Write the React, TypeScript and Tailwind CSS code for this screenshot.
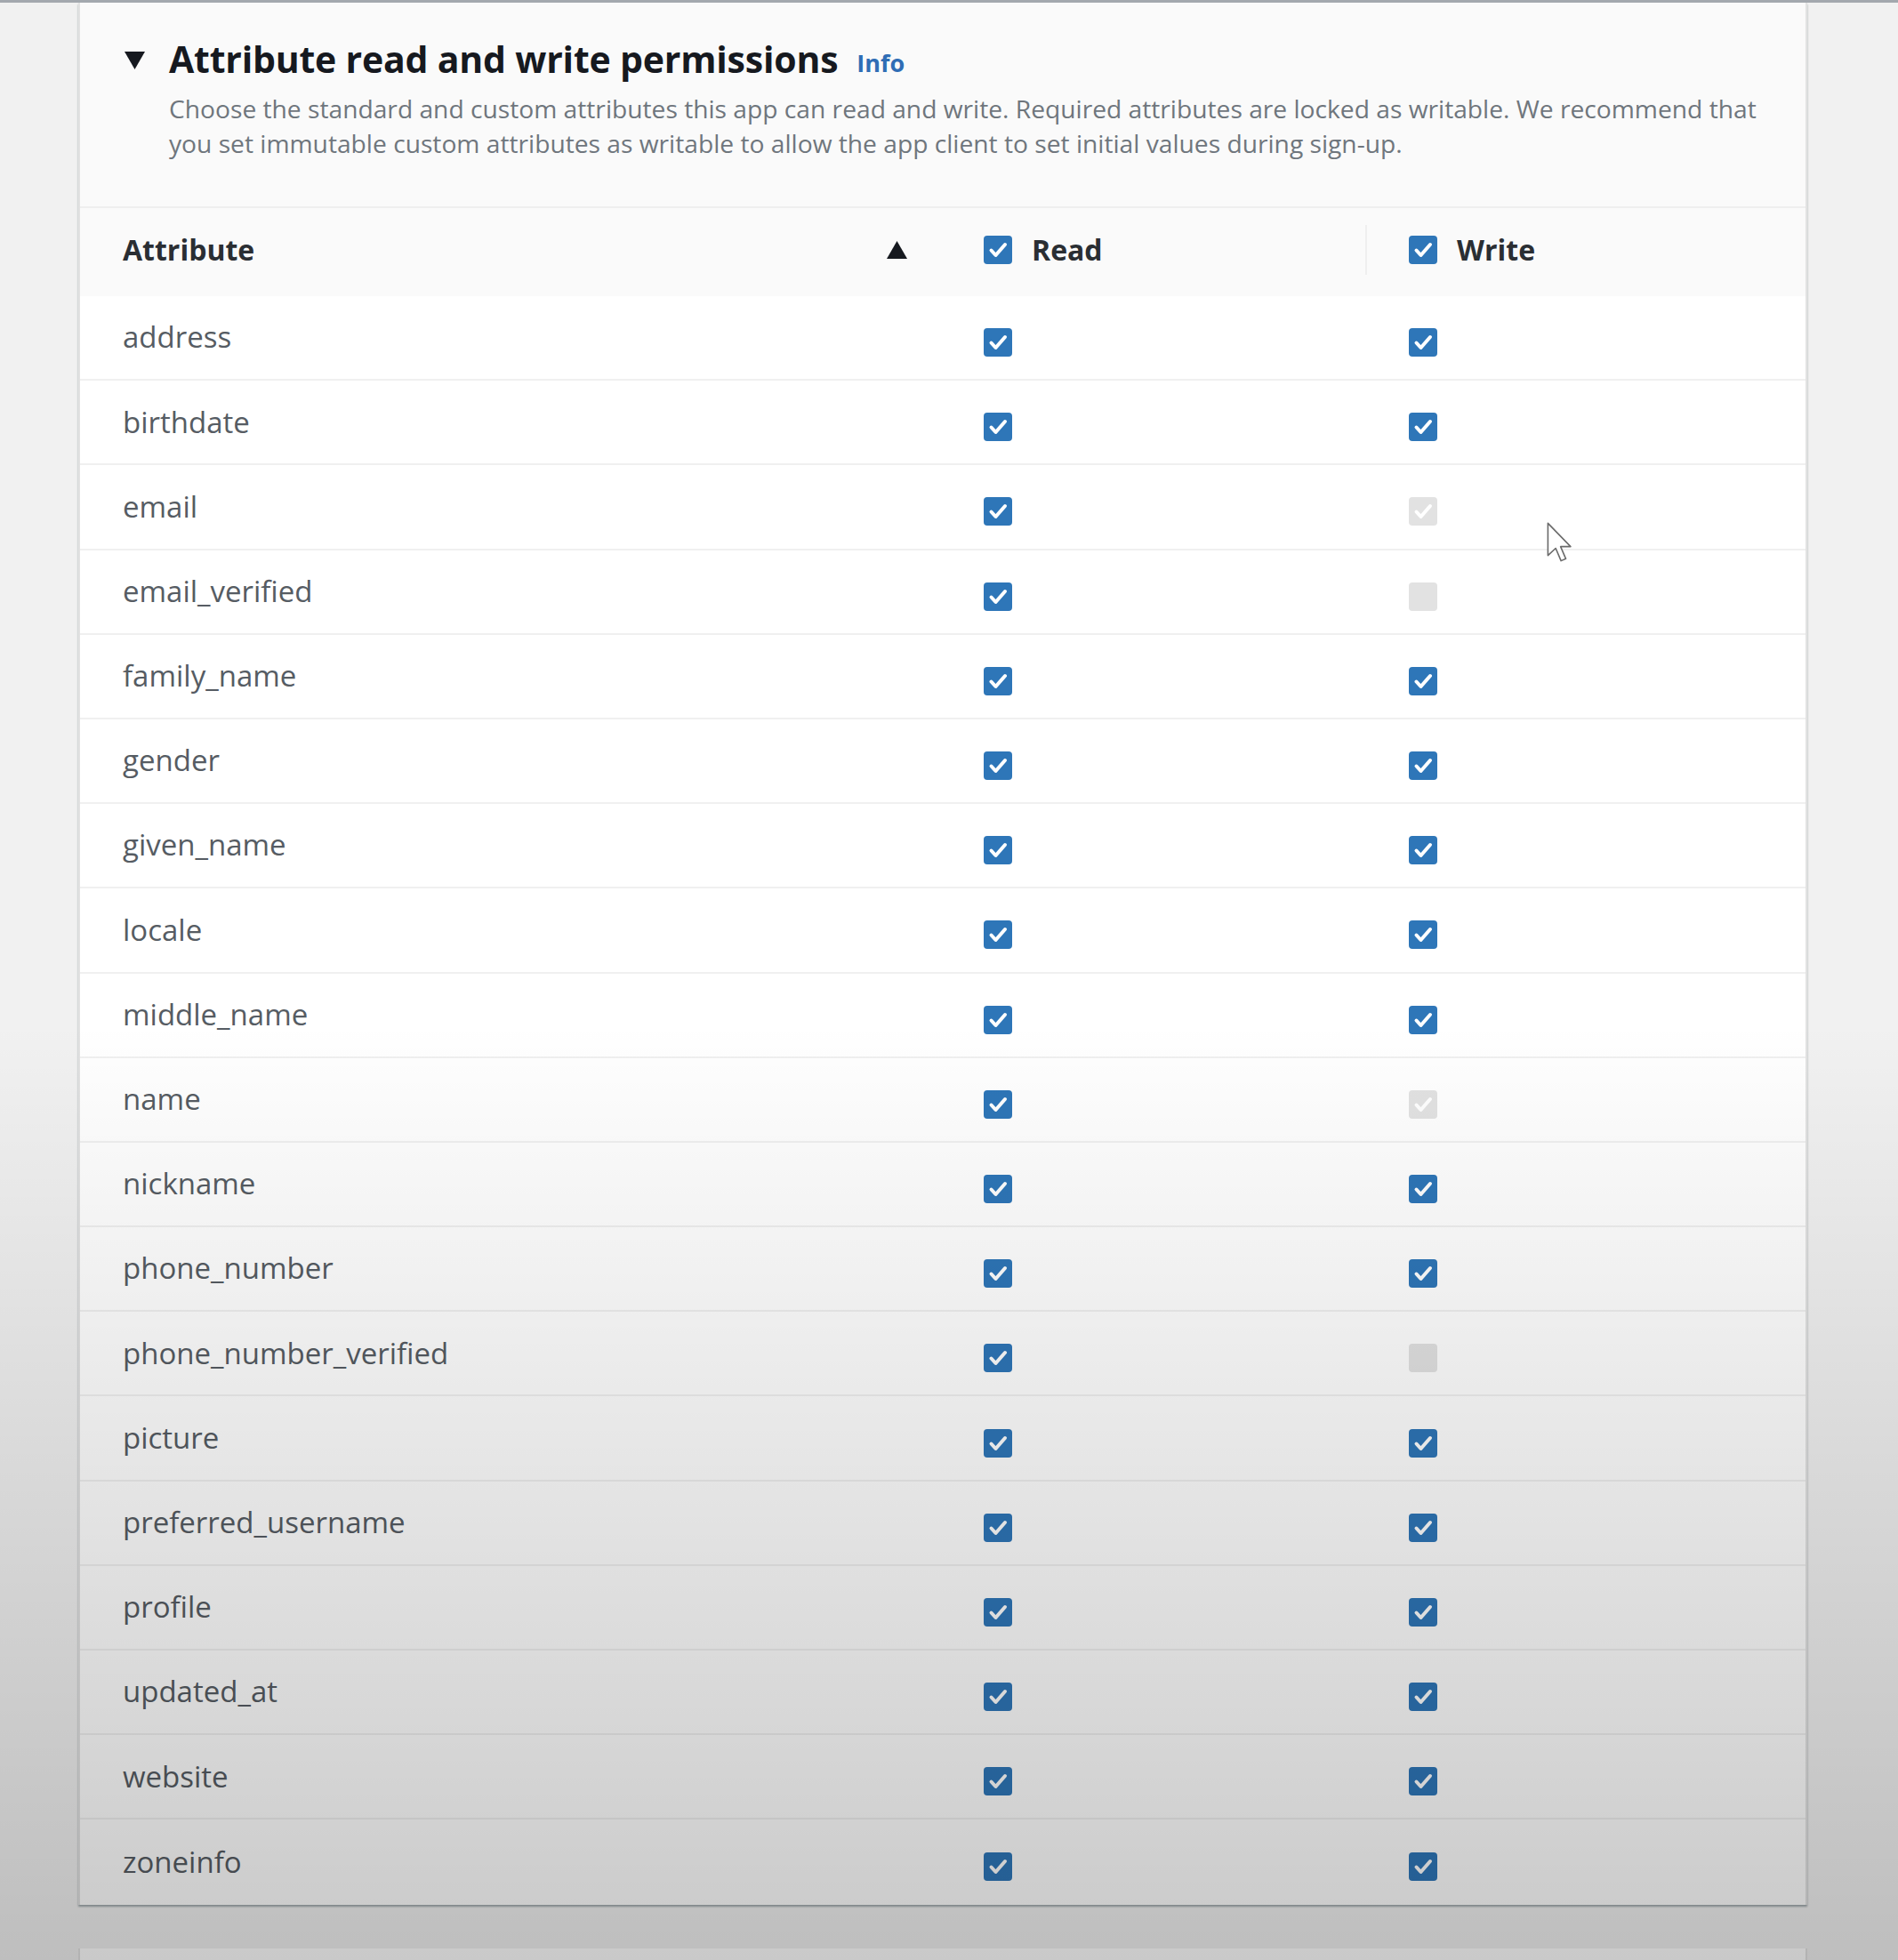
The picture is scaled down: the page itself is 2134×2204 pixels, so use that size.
import React from "react";

type Row = { name: string; write: "on" | "lockedOn" | "lockedOff" };

const rows: Row[] = [
  { name: "address", write: "on" },
  { name: "birthdate", write: "on" },
  { name: "email", write: "lockedOn" },
  { name: "email_verified", write: "lockedOff" },
  { name: "family_name", write: "on" },
  { name: "gender", write: "on" },
  { name: "given_name", write: "on" },
  { name: "locale", write: "on" },
  { name: "middle_name", write: "on" },
  { name: "name", write: "lockedOn" },
  { name: "nickname", write: "on" },
  { name: "phone_number", write: "on" },
  { name: "phone_number_verified", write: "lockedOff" },
  { name: "picture", write: "on" },
  { name: "preferred_username", write: "on" },
  { name: "profile", write: "on" },
  { name: "updated_at", write: "on" },
  { name: "website", write: "on" },
  { name: "zoneinfo", write: "on" },
];

function Checkbox({ state }: { state: "on" | "lockedOn" | "lockedOff" }) {
  const bg = state === "on" ? "bg-[#2e76b8]" : "bg-[#e2e2e2]";
  return (
    <div className={`w-[32px] h-[32px] rounded-[4px] ${bg} flex items-center justify-center shrink-0`}>
      {state !== "lockedOff" && (
        <svg width="32" height="32" viewBox="0 0 32 32">
          <path d="M8.5 16.5 L13.5 22 L24 10" fill="none" stroke="#ffffff" strokeWidth="4" strokeLinecap="round" strokeLinejoin="round" />
        </svg>
      )}
    </div>
  );
}

export default function App() {
  return (
    <div className="relative w-[2134px] h-[2204px] overflow-hidden bg-[#f1f1f1] font-['Open_Sans',sans-serif]">
      <div className="h-[3px] bg-[#a3a8ae]" />
      <div className="ml-[88px] w-[1944px] bg-[#fafafa] border-x-2 border-[#e2e2e2] shadow-[0_2px_2px_0_rgba(0,28,36,0.35)]">
        {/* Title */}
        <div className="pt-[35px] pl-[50px] pr-[40px]">
          <div className="flex items-center h-[56px]">
            <svg width="23" height="20" viewBox="0 0 23 20" className="shrink-0 mt-[4px]">
              <polygon points="0,0 23,0 11.5,20" fill="#16191f" />
            </svg>
            <div className="ml-[27px] text-[41px] leading-[56px] font-bold text-[#16191f] tracking-[-0.2px]">
              Attribute read and write permissions
            </div>
            <div className="ml-[21px] mt-[10px] text-[27px] font-bold text-[#2f6db5]">Info</div>
          </div>
          <div className="ml-[50px] mt-[9px] text-[28.2px] leading-[39px] text-[#6f767d] whitespace-nowrap">
            Choose the standard and custom attributes this app can read and write. Required attributes are locked as writable. We recommend that
            <br />
            you set immutable custom attributes as writable to allow the app client to set initial values during sign-up.
          </div>
        </div>

        {/* Table */}
        <div className="mt-[51px]">
          <div className="flex items-center h-[101px] pb-[5px] border-t-2 border-[#efefef] bg-[#fafafa] text-[32px] font-bold text-[#2a2e33]">
            <div className="w-[1016px] pl-[48px] pr-[86px] flex items-center justify-between">
              <span>Attribute</span>
              <svg width="23" height="20" viewBox="0 0 23 20">
                <polygon points="11.5,0 23,20 0,20" fill="#16191f" />
              </svg>
            </div>
            <div className="w-[429px] flex items-center gap-[22px]">
              <Checkbox state="on" />
              <span>Read</span>
            </div>
            <div className="w-[2px] h-[56px] bg-[#efefef]" />
            <div className="flex-1 pl-[47px] flex items-center gap-[22px]">
              <Checkbox state="on" />
              <span>Write</span>
            </div>
          </div>
          {rows.map((r, i) => (
            <div
              key={r.name}
              className={`flex items-center h-[95.2px] bg-white text-[33px] text-[#565c63] ${i < rows.length - 1 ? "border-b-2 border-[#f0f0f0]" : ""}`}
            >
              <div className="w-[1016px] pl-[48px] pb-[1px]">{r.name}</div>
              <div className="w-[478px] mt-[11px]">
                <Checkbox state="on" />
              </div>
              <div className="flex-1 mt-[11px]">
                <Checkbox state={r.write} />
              </div>
            </div>
          ))}
        </div>
      </div>
      <div className="mt-[49px] ml-[88px] w-[1944px] h-[40px] bg-white border-x-2 border-[#e2e2e2]" />

      {/* video vignette */}
      <div className="absolute inset-0 pointer-events-none bg-[linear-gradient(to_bottom,rgba(0,0,0,0)_1150px,rgba(0,0,0,0.21)_2204px)]" />

      {/* mouse cursor */}
      <svg className="absolute left-[1739px] top-[587px] pointer-events-none" width="35" height="51" viewBox="0 0 26 38">
        <path d="M1 1 L1 28 L7.5 22 L12 32.5 L16 30.8 L11.6 20.6 L20 20.6 Z" fill="#ffffff" stroke="#6b6b6b" strokeWidth="1.2" strokeLinejoin="round" />
      </svg>
    </div>
  );
}
